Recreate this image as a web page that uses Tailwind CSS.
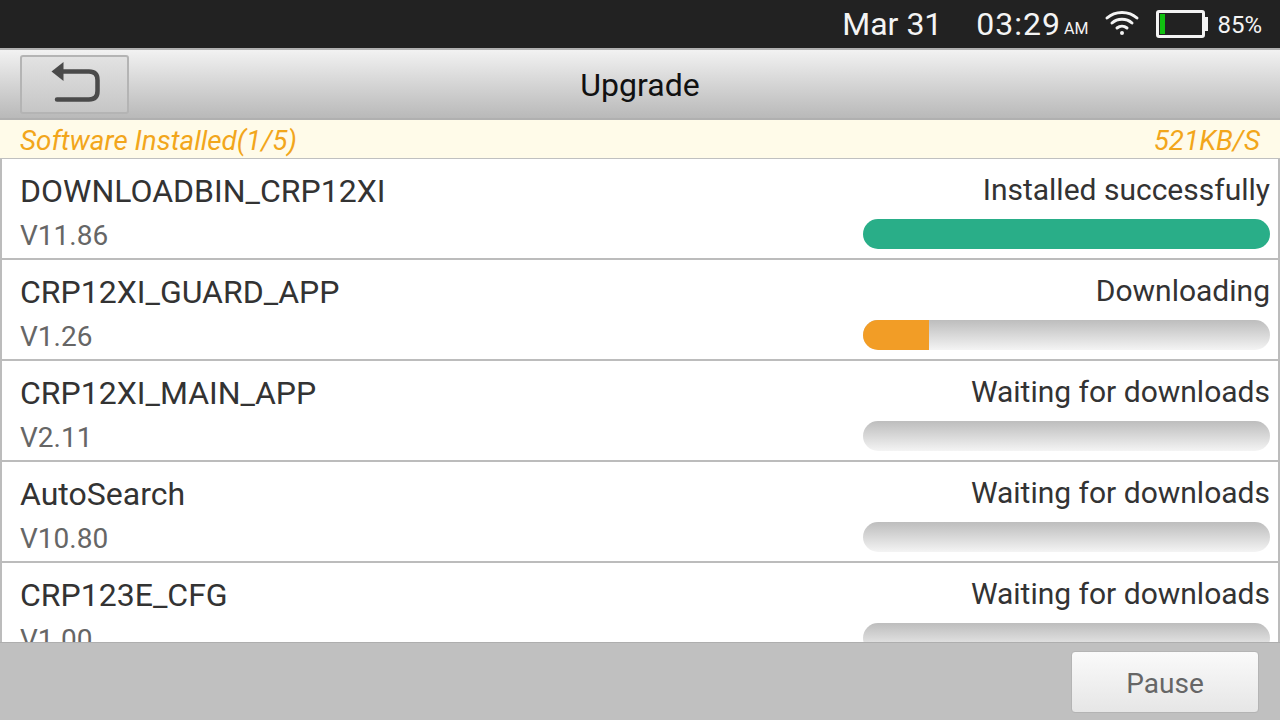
<!DOCTYPE html>
<html lang="en">
<head>
<meta charset="UTF-8" />
<title>Upgrade</title>
<script src="https://cdn.jsdelivr.net/npm/@tailwindcss/browser@4"></script>
</head>
<body class="w-[1280px] h-[720px] overflow-hidden flex flex-col bg-[#c0c0c0] font-['Roboto',sans-serif]">
	<!-- status bar -->
	<div class="h-12 shrink-0 bg-[#222222] flex items-center justify-end text-[#f4f4f4]">
		<span class="text-[32px] leading-none">Mar 31</span>
		<span class="text-[32px] leading-none ml-[34px] tracking-[1px]">03:29</span>
		<span class="text-[16px] leading-none ml-[3px] mt-[10px]">AM</span>
		<svg class="ml-[16px] mb-[2px]" width="36" height="28" viewBox="0 0 36 28" fill="none" stroke="#f4f4f4" stroke-width="3" stroke-linecap="round">
			<path d="M3 9 C11 1.500 25 1.500 33 9" />
			<path d="M8 14 C13.500 9 22.500 9 28 14" />
			<path d="M13 19 C16 16.500 20 16.500 23 19" />
			<circle cx="18" cy="24" r="2" fill="#f4f4f4" stroke="none" />
		</svg>
		<div class="ml-[16px] flex items-center">
			<div class="w-[49px] h-[28px] border-[3px] border-[#f4f4f4] rounded-[3px] p-px">
				<div class="w-[5px] h-full bg-[#10c010]"></div>
			</div>
			<div class="w-[3px] h-[14px] bg-[#f4f4f4]"></div>
		</div>
		<span class="text-[24px] leading-none ml-[9px] mr-[18px] mt-[2px]">85%</span>
	</div>

	<!-- title bar -->
	<div class="relative h-[72px] shrink-0 flex items-center pl-5 border-y-2 border-[#b0b0b0] bg-linear-to-b from-[#f2f2f2] to-[#b9b9b9]">
		<button class="w-[109px] h-[59px] flex items-center justify-center rounded-[3px] border-2 border-[#b4b4b4] bg-linear-to-b from-[#e2e2e2] to-[#c6c6c6]">
			<svg width="50" height="44" viewBox="0 0 50 44" fill="none">
				<path d="M1.500 9.500 L13.500 0 L13.500 19 Z" fill="#4a4a4a" />
				<path d="M12 9.500 H39 Q47.500 9.500 47.500 18 V29 Q47.500 37.500 39 37.500 H7" stroke="#4a4a4a" stroke-width="4.500" stroke-linecap="round" />
			</svg>
		</button>
		<span class="absolute inset-x-0 mt-[2px] text-center text-[32px] text-[#111111]">Upgrade</span>
	</div>

	<!-- progress summary -->
	<div class="h-[39px] shrink-0 flex items-center justify-between pt-1 px-5 bg-[#fffbe9] italic text-[27.8px] text-[#f2a61b] border-b border-[#c0c0c0]">
		<span>Software Installed(1/5)</span>
		<span>521KB/S</span>
	</div>

	<!-- package list -->
	<div class="h-[483px] shrink-0 overflow-hidden bg-white border-x-2 border-[#bcbcbc] text-[#333333]">
		<div class="h-[101px] flex justify-between pl-[18px] pr-2 border-b-2 border-[#bcbcbc]">
			<div>
				<div class="text-[32px] leading-9 mt-[14px]">DOWNLOADBIN_CRP12XI</div>
				<div class="text-[28px] leading-8 mt-[11px] text-[#666666]">V11.86</div>
			</div>
			<div class="w-[407px] flex flex-col items-end">
				<div class="text-[30px] leading-9 mt-[13px]">Installed successfully</div>
				<div class="w-full h-[30px] mt-[11px] rounded-full bg-[#29ae88]"></div>
			</div>
		</div>
		<div class="h-[101px] flex justify-between pl-[18px] pr-2 border-b-2 border-[#bcbcbc]">
			<div>
				<div class="text-[32px] leading-9 mt-[14px]">CRP12XI_GUARD_APP</div>
				<div class="text-[28px] leading-8 mt-[11px] text-[#666666]">V1.26</div>
			</div>
			<div class="w-[407px] flex flex-col items-end">
				<div class="text-[30px] leading-9 mt-[13px]">Downloading</div>
				<div class="w-full h-[30px] mt-[11px] rounded-full overflow-hidden bg-linear-to-b from-[#bdbdbd] to-[#f4f4f4]">
					<div class="w-[66px] h-full bg-[#f29d26]"></div>
				</div>
			</div>
		</div>
		<div class="h-[101px] flex justify-between pl-[18px] pr-2 border-b-2 border-[#bcbcbc]">
			<div>
				<div class="text-[32px] leading-9 mt-[14px]">CRP12XI_MAIN_APP</div>
				<div class="text-[28px] leading-8 mt-[11px] text-[#666666]">V2.11</div>
			</div>
			<div class="w-[407px] flex flex-col items-end">
				<div class="text-[30px] leading-9 mt-[13px]">Waiting for downloads</div>
				<div class="w-full h-[30px] mt-[11px] rounded-full bg-linear-to-b from-[#bdbdbd] to-[#f4f4f4]"></div>
			</div>
		</div>
		<div class="h-[101px] flex justify-between pl-[18px] pr-2 border-b-2 border-[#bcbcbc]">
			<div>
				<div class="text-[32px] leading-9 mt-[14px]">AutoSearch</div>
				<div class="text-[28px] leading-8 mt-[11px] text-[#666666]">V10.80</div>
			</div>
			<div class="w-[407px] flex flex-col items-end">
				<div class="text-[30px] leading-9 mt-[13px]">Waiting for downloads</div>
				<div class="w-full h-[30px] mt-[11px] rounded-full bg-linear-to-b from-[#bdbdbd] to-[#f4f4f4]"></div>
			</div>
		</div>
		<div class="h-[101px] flex justify-between pl-[18px] pr-2 border-b-2 border-[#bcbcbc]">
			<div>
				<div class="text-[32px] leading-9 mt-[14px]">CRP123E_CFG</div>
				<div class="text-[28px] leading-8 mt-[11px] text-[#666666]">V1.00</div>
			</div>
			<div class="w-[407px] flex flex-col items-end">
				<div class="text-[30px] leading-9 mt-[13px]">Waiting for downloads</div>
				<div class="w-full h-[30px] mt-[11px] rounded-full bg-linear-to-b from-[#bdbdbd] to-[#f4f4f4]"></div>
			</div>
		</div>
	</div>

	<!-- footer -->
	<div class="flex-1 flex items-center justify-end pr-[21px] bg-[#c0c0c0] border-t border-[#aeaeae]">
		<button class="w-[188px] h-[62px] mt-[1px] pt-1 rounded-[4px] border border-[#b4b4b4] bg-linear-to-b from-[#fafafa] to-[#e6e6e6] text-[28px] text-[#666666]">Pause</button>
	</div>
</body>
</html>
